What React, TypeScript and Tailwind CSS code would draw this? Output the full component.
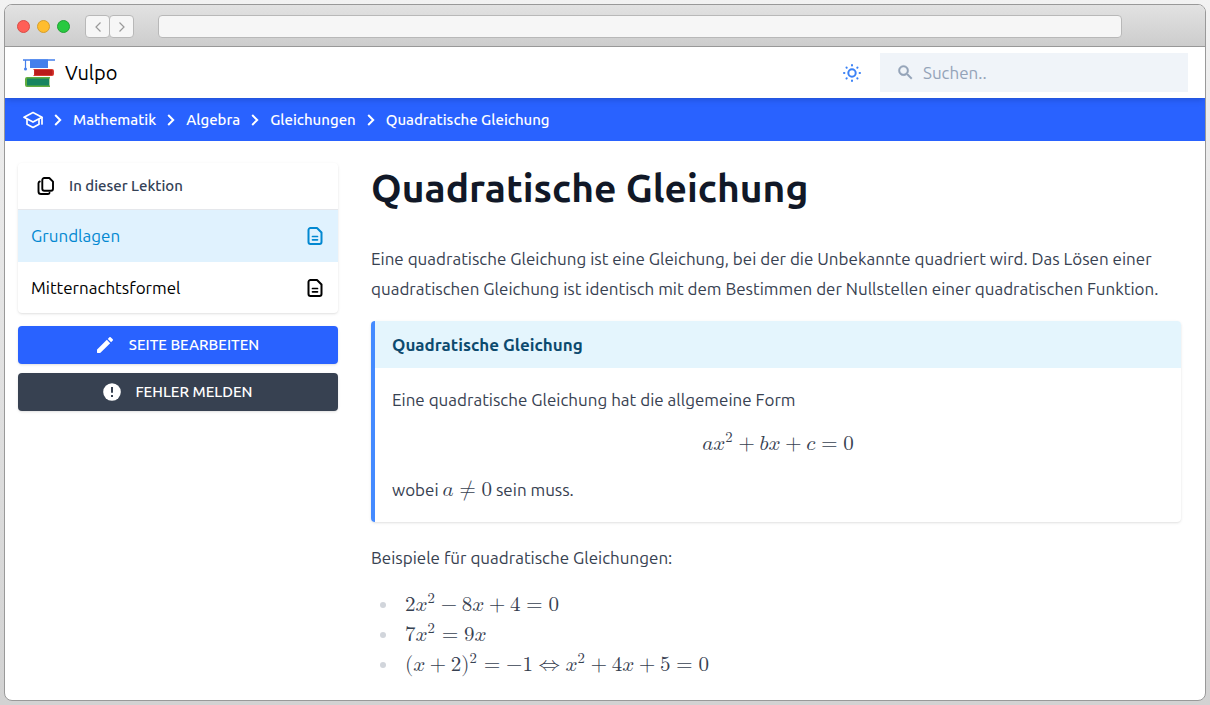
import { Fragment, type ReactNode } from "react";

const crumbs = ["Mathematik", "Algebra", "Gleichungen", "Quadratische Gleichung"];

function Logo() {
  return (
    <svg viewBox="0 0 32 30" className="h-[30px] w-8" aria-hidden="true">
      <path d="M7 1.500h18V10H7z" fill="#437fec" />
      <path d="M0 2h32" stroke="#437fec" strokeWidth="1.4" />
      <path d="M2.500 2v9" stroke="#437fec" strokeWidth="1.2" />
      <circle cx="2.500" cy="11" r="1.500" fill="#437fec" />
      <path d="M10 11h19a2 2 0 0 1 2 2v3a2 2 0 0 1-2 2H10l1-1v-5z" fill="#d93b32" />
      <path d="M11.500 12H29.500v5H11.500z" fill="#b91c1c" />
      <path d="M27 19H4a2 2 0 0 0-2 2v6a2 2 0 0 0 2 2h23v-1l-.5-1v-6l.5-1z" fill="#62ad3f" />
      <path d="M4 20.500h22v7H4z" fill="#17855f" />
    </svg>
  );
}

function CapIcon() {
  return (
    <svg viewBox="0 0 24 24" className="size-6 shrink-0" fill="none" stroke="currentColor" strokeWidth="1.7" strokeLinejoin="round" strokeLinecap="round" aria-hidden="true">
      <path d="M12 4.500 3 9.300l9 4.800 9-4.800z" />
      <path d="M6 11.500v4.700l6 3.300 6-3.300v-4.700M21 9.500V16" />
    </svg>
  );
}

function ChevronIcon() {
  return (
    <svg viewBox="0 0 8 12" className="h-3 w-2 shrink-0" fill="none" stroke="currentColor" strokeWidth="2" aria-hidden="true">
      <path d="m1.200 1 5 5-5 5" />
    </svg>
  );
}

function SunIcon() {
  return (
    <svg viewBox="0 0 20 20" className="size-5" fill="none" stroke="currentColor" strokeWidth="2" strokeLinecap="round" aria-hidden="true">
      <circle cx="10" cy="10" r="3.700" />
      <path d="M10 2v.4M10 17.600v.4M2 10h.4M17.600 10h.4M4.500 4.500l.2.200M15.300 15.300l.2.200M4.500 15.500l.2-.2M15.300 4.700l.2-.2" />
    </svg>
  );
}

function SearchIcon() {
  return (
    <svg viewBox="0 0 24 24" className="size-[19px] shrink-0" fill="currentColor" stroke="currentColor" strokeWidth=".6" aria-hidden="true">
      <path d="M15.500 14h-.79l-.28-.27A6.471 6.471 0 0 0 16 9.500 6.500 6.500 0 1 0 9.500 16c1.610 0 3.090-.59 4.230-1.570l.27.28v.79l5 4.990L20.490 19l-4.990-5zm-6 0C7.010 14 5 11.990 5 9.500S7.010 5 9.500 5 14 7.010 14 9.500 11.990 14 9.500 14z" />
    </svg>
  );
}

function CopyIcon() {
  return (
    <svg viewBox="0 0 18 18" className="size-[18px] shrink-0" fill="none" stroke="currentColor" strokeWidth="1.900" strokeLinejoin="round" strokeLinecap="round" aria-hidden="true">
      <path d="M7.300 1h5L16 4.700v7a2 2 0 0 1-2 2H7.300a2 2 0 0 1-2-2V3a2 2 0 0 1 2-2z" />
      <path d="M2.800 4.500A1.800 1.800 0 0 0 1.500 6.200v8.200A2.600 2.600 0 0 0 4.100 17H11a1.700 1.700 0 0 0 1.600-1.200" />
    </svg>
  );
}

function FileIcon() {
  return (
    <svg viewBox="0 0 18 18" className="size-[18px] shrink-0" fill="none" stroke="currentColor" strokeWidth="2" strokeLinejoin="round" strokeLinecap="round" aria-hidden="true">
      <path d="M4.500 1H11l4.500 4.500V15a2 2 0 0 1-2 2h-9a2 2 0 0 1-2-2V3a2 2 0 0 1 2-2z" />
      <path d="M6.500 9.500h5M6.500 12.800h5" strokeWidth="1.700" />
    </svg>
  );
}

function PencilIcon() {
  return (
    <svg viewBox="3 3 18 18" className="size-4" fill="currentColor" aria-hidden="true">
      <path d="M3 17.460v3.040c0 .28.220.5.500.5h3.040c.13 0 .26-.05.350-.15L17.810 9.940l-3.750-3.750L3.150 17.100c-.1.100-.15.220-.15.360zM20.710 7.040a1 1 0 0 0 0-1.410l-2.340-2.340a1 1 0 0 0-1.410 0l-1.830 1.830 3.750 3.750z" />
    </svg>
  );
}

function AlertIcon() {
  return (
    <svg viewBox="0 0 18 18" className="size-[18px]" aria-hidden="true">
      <circle cx="9" cy="9" r="8.800" fill="currentColor" />
      <path d="M9 4v5.800M9 12v2" stroke="#374151" strokeWidth="2" />
    </svg>
  );
}

function Formula({ children }: { children: ReactNode }) {
  return <math className="font-['Latin_Modern_Math',math] text-[21px]">{children}</math>;
}

function Squared({ children }: { children: ReactNode }) {
  return (
    <msup>
      {children}
      <mn>2</mn>
    </msup>
  );
}

const examples = [
  <Formula>
    <mn>2</mn><Squared><mi>x</mi></Squared><mo>−</mo><mn>8</mn><mi>x</mi><mo>+</mo><mn>4</mn><mo>=</mo><mn>0</mn>
  </Formula>,
  <Formula>
    <mn>7</mn><Squared><mi>x</mi></Squared><mo>=</mo><mn>9</mn><mi>x</mi>
  </Formula>,
  <Formula>
    <mo stretchy="false">(</mo><mi>x</mi><mo>+</mo><mn>2</mn><mo stretchy="false">)</mo><Squared><mrow /></Squared><mo>=</mo>
    <mrow><mo>−</mo><mn>1</mn></mrow><mo stretchy="false">⇔</mo>
    <Squared><mi>x</mi></Squared><mo>+</mo><mn>4</mn><mi>x</mi><mo>+</mo><mn>5</mn><mo>=</mo><mn>0</mn>
  </Formula>,
];

export default function App() {
  return (
    <div className="min-h-screen bg-linear-to-b from-[#f2f2f2] to-[#d2d2d2] p-1 font-['Ubuntu','Open_Sans',sans-serif]">
      <div className="flex min-h-[calc(100vh-8px)] flex-col overflow-hidden rounded-lg border border-[#999] bg-white">
        <div className="flex h-[42px] shrink-0 items-center border-b border-[#999] bg-linear-to-b from-[#e2e2e2] to-[#cdcdcd] pt-0.5 pl-3">
          <div className="flex gap-[7px]">
            <span className="size-[13px] rounded-full border border-[#d94c46] bg-[#ff5f57]" />
            <span className="size-[13px] rounded-full border border-[#d69e2b] bg-[#ffbd2e]" />
            <span className="size-[13px] rounded-full border border-[#20a132] bg-[#28c940]" />
          </div>
          <div className="ml-[15px] flex text-[#999]">
            <button aria-label="Zurück" className="flex h-[23px] w-[25px] items-center justify-center rounded-sm border border-[#b8b8b8] bg-[#f6f6f6]">
              <svg viewBox="0 0 6 10" className="h-2.5 w-1.5" fill="none" stroke="currentColor" strokeWidth="1.200"><path d="M5.500.5 1 5l4.500 4.500" /></svg>
            </button>
            <button aria-label="Vor" className="-ml-px flex h-[23px] w-[25px] items-center justify-center rounded-sm border border-[#b8b8b8] bg-[#f6f6f6]">
              <svg viewBox="0 0 6 10" className="h-2.5 w-1.5" fill="none" stroke="currentColor" strokeWidth="1.200"><path d="M.5.5 5 5 .5 9.500" /></svg>
            </button>
          </div>
          <input aria-label="Adresse" className="mr-[83px] ml-6 h-[23px] min-w-0 flex-1 rounded-sm border border-[#b8b8b8] bg-[#f6f6f6] px-2 text-sm" />
        </div>

        <header className="relative flex h-[51px] shrink-0 items-center pr-[17px] pl-[18px] shadow-md">
          <a href="#" className="flex items-center gap-2.5 text-xl text-black">
            <Logo />
            Vulpo
          </a>
          <button aria-label="Farbschema wechseln" className="mr-[18px] ml-auto text-[#3b82f6]">
            <SunIcon />
          </button>
          <label className="flex h-[39px] w-[308px] items-center gap-2 bg-[#f0f4f9] px-4 text-[#94a3b8]">
            <SearchIcon />
            <input type="search" aria-label="Suchen" placeholder="Suchen.." className="min-w-0 flex-1 bg-transparent text-[17px] placeholder:text-[#94a3b8]" />
          </label>
        </header>

        <nav aria-label="Brotkrumen" className="flex h-[43px] shrink-0 items-center gap-[11px] bg-[#2962ff] pl-4 text-[15px] leading-6 font-medium text-white">
          <a href="#" aria-label="Startseite" className="-mr-0.5"><CapIcon /></a>
          {crumbs.map((crumb) => (
            <Fragment key={crumb}>
              <ChevronIcon />
              <a href="#">{crumb}</a>
            </Fragment>
          ))}
        </nav>

        <div className="flex gap-[33px] pt-[22px] pr-6 pl-[13px]">
          <aside className="w-80 shrink-0">
            <nav aria-label="In dieser Lektion" className="overflow-hidden rounded-sm shadow-sm">
              <h2 className="flex h-[47px] items-center gap-3.5 border-b border-[#e5e7eb] px-[19px] text-[15px] font-medium text-[#334155]">
                <span className="text-black"><CopyIcon /></span>
                In dieser Lektion
              </h2>
              <a href="#" className="flex h-[52px] items-center justify-between bg-[#e0f2fe] pr-3.5 pl-[13px] text-[17px] text-[#0288d1]">
                Grundlagen
                <FileIcon />
              </a>
              <a href="#" className="flex h-[51px] items-center justify-between pr-3.5 pl-[13px] text-[17px] text-black">
                Mitternachtsformel
                <FileIcon />
              </a>
            </nav>
            <button className="mt-[13px] flex h-[38px] w-full items-center justify-center gap-4 rounded-sm bg-[#2962ff] text-[15px] leading-6 font-medium text-white shadow-sm">
              <PencilIcon />
              SEITE BEARBEITEN
            </button>
            <button className="mt-[9px] flex h-[38px] w-full items-center justify-center gap-3.5 rounded-sm bg-[#374151] text-[15px] leading-6 font-medium text-white shadow-sm">
              <AlertIcon />
              FEHLER MELDEN
            </button>
          </aside>

          <main className="min-w-0 flex-1 text-[17px] leading-[30px] text-[#374151]">
            <h1 className="text-[39px] leading-[50px] font-bold text-[#111827]">Quadratische Gleichung</h1>
            <p className="mt-[31px]">
              Eine quadratische Gleichung ist eine Gleichung, bei der die Unbekannte quadriert wird. Das Lösen einer quadratischen Gleichung ist identisch mit dem Bestimmen der Nullstellen einer quadratischen Funktion.
            </p>
            <section className="mt-[17px] overflow-hidden rounded-sm border-l-4 border-[#448aff] pb-[17px] shadow-sm">
              <h2 className="flex h-[47px] items-center bg-[#e4f5fd] px-[17px] font-semibold text-[#0c4a6e]">Quadratische Gleichung</h2>
              <div className="px-[17px] pt-[17px]">
                <p>Eine quadratische Gleichung hat die allgemeine Form</p>
                <p className="mt-3.5 mb-4 h-[30px] text-center">
                  <Formula>
                    <mi>a</mi><Squared><mi>x</mi></Squared><mo>+</mo><mi>b</mi><mi>x</mi><mo>+</mo><mi>c</mi><mo>=</mo><mn>0</mn>
                  </Formula>
                </p>
                <p className="h-[30px]">wobei <Formula><mi>a</mi><mo>≠</mo><mn>0</mn></Formula> sein muss.</p>
              </div>
            </section>
            <p className="mt-[21px]">Beispiele für quadratische Gleichungen:</p>
            <ul className="mt-[17px]">
              {examples.map((example, index) => (
                <li key={index} className="flex h-[30px] items-center gap-[19px] pl-[9px]">
                  <span className="size-1.5 rounded-full bg-[#d1d5db]" />
                  <span className="h-[30px]">{example}</span>
                </li>
              ))}
            </ul>
          </main>
        </div>
      </div>
    </div>
  );
}
